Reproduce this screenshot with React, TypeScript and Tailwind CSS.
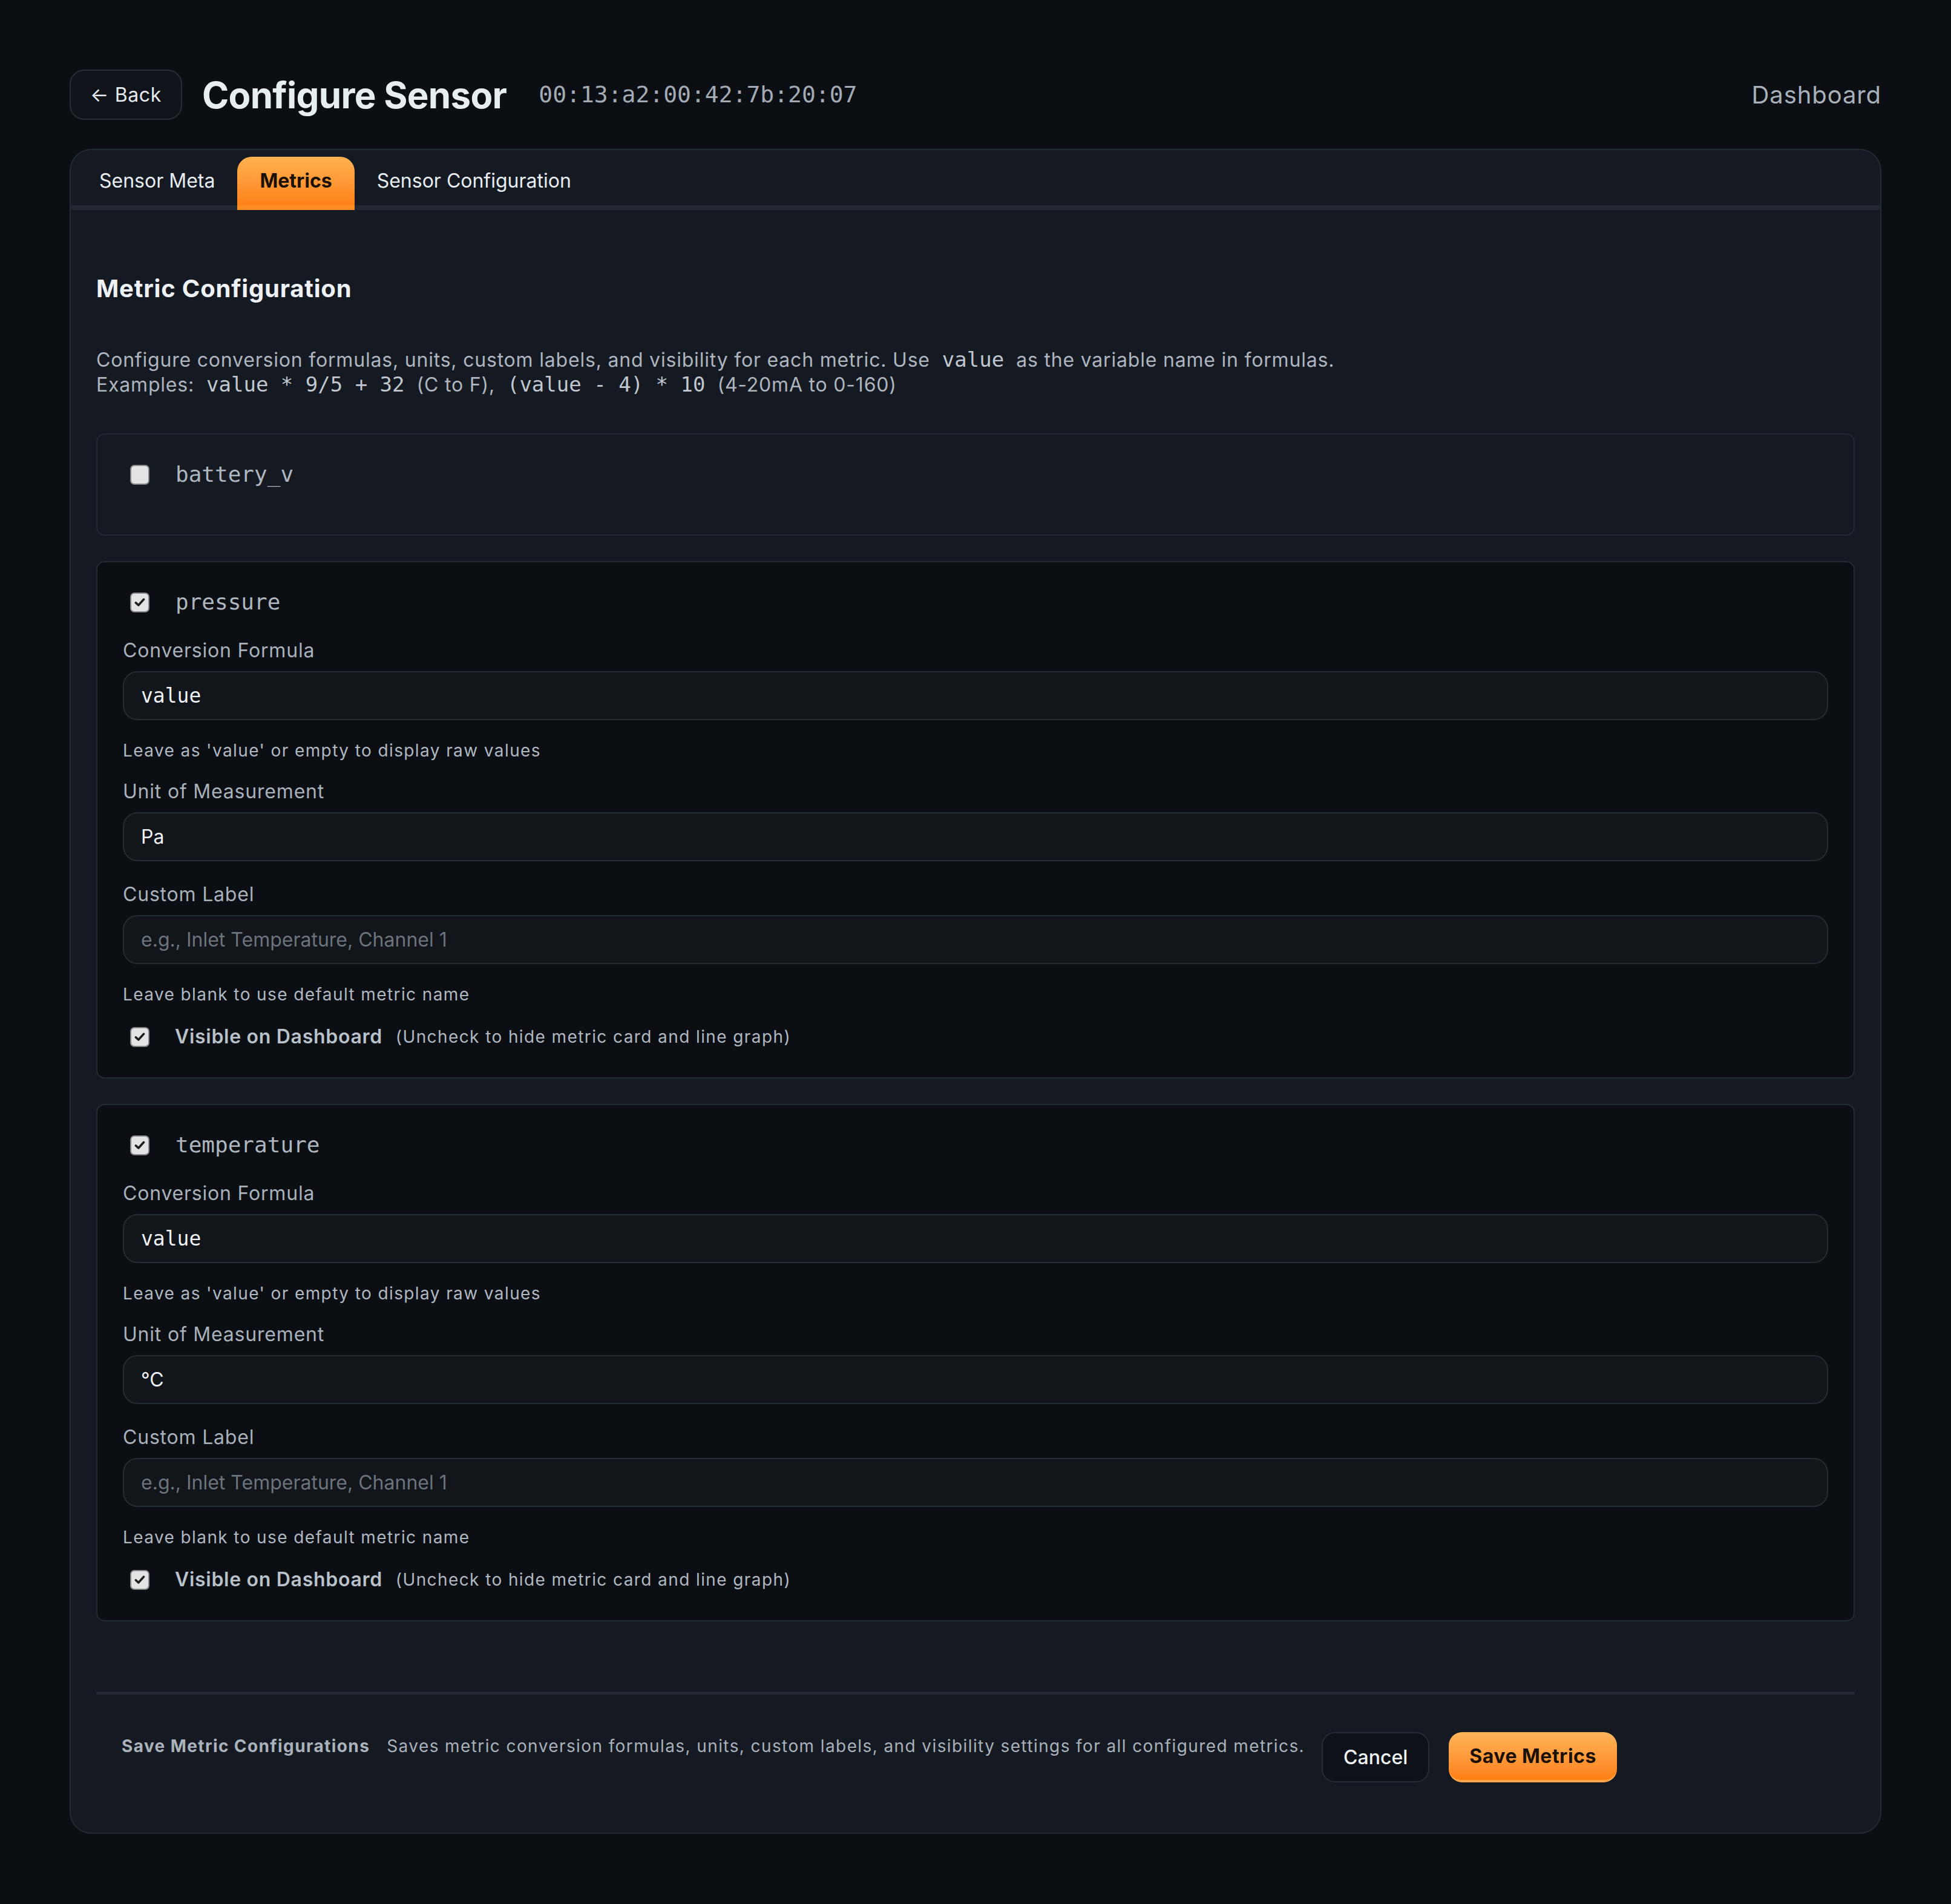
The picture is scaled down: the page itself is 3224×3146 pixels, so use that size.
import React from "react";

const mono = "font-['DejaVu_Sans_Mono','Liberation_Mono',monospace]";

type Metric = {
  name: string;
  enabled: boolean;
  formula?: string;
  unit?: string;
};

const metrics: Metric[] = [
  { name: "battery_v", enabled: false },
  { name: "pressure", enabled: true, formula: "value", unit: "Pa" },
  { name: "temperature", enabled: true, formula: "value", unit: "°C" },
];

function CheckBox({ checked }: { checked: boolean }) {
  return (
    <span className="ml-[12px] flex h-[33px] w-[32px] shrink-0 items-center justify-center rounded-[7px] border-2 border-[#858585] bg-[#e3e3e3]">
      {checked && (
        <svg viewBox="0 0 16 16" className="h-[22px] w-[22px]">
          <path
            d="M3.2 8.6 L6.4 11.6 L12.8 4.6"
            fill="none"
            stroke="#1e1e1e"
            strokeWidth="2.6"
            strokeLinecap="round"
            strokeLinejoin="round"
          />
        </svg>
      )}
    </span>
  );
}

function Field({
  label,
  children,
  className = "",
}: {
  label: string;
  children: React.ReactNode;
  className?: string;
}) {
  return (
    <div className={className}>
      <div className="text-[32px] leading-[48px] tracking-[0.8px] text-[#a9b1bb]">
        {label}
      </div>
      <div className="mt-[10px] flex h-[81px] items-center rounded-[24px] border-2 border-[#252c35] bg-[#121519] px-[28px]">
        {children}
      </div>
    </div>
  );
}

function Hint({ children }: { children: React.ReactNode }) {
  return (
    <p className="mt-[30px] text-[28px] leading-[40px] tracking-[1.4px] text-[#b0b8c1]">
      {children}
    </p>
  );
}

function MetricCard({ metric }: { metric: Metric }) {
  return (
    <div
      className={`rounded-[14px] border-2 border-[#242b34] px-[42px] pt-[42px] pb-[43px] ${
        metric.enabled ? "bg-[#0b0e12]" : "bg-[#151a22]"
      }`}
    >
      <div className="mb-[32px] flex h-[48px] items-center">
        <CheckBox checked={metric.enabled} />
        <span className={`${mono} ml-[43px] text-[36px] text-[#aeb6bf]`}>
          {metric.name}
        </span>
      </div>

      {metric.enabled && (
        <>
          <Field label="Conversion Formula">
            <span className={`${mono} text-[33px] text-[#eef2f6]`}>
              {metric.formula}
            </span>
          </Field>
          <Hint>Leave as 'value' or empty to display raw values</Hint>

          <Field label="Unit of Measurement" className="mt-[24px]">
            <span className="text-[32px] text-[#eef2f6]">{metric.unit}</span>
          </Field>

          <Field label="Custom Label" className="mt-[31px]">
            <span className="text-[32px] text-[#6b737d]">
              e.g., Inlet Temperature, Channel 1
            </span>
          </Field>
          <Hint>Leave blank to use default metric name</Hint>

          <div className="mt-[26px] flex h-[48px] items-center">
            <CheckBox checked />
            <span className="ml-[42px] text-[32px] font-semibold tracking-[0.7px] text-[#b9c1ca]">
              Visible on Dashboard
            </span>
            <span className="ml-[22px] text-[28px] tracking-[1.4px] text-[#b0b8c1]">
              (Uncheck to hide metric card and line graph)
            </span>
          </div>
        </>
      )}
    </div>
  );
}

export default function App() {
  return (
    <div className="min-h-[3146px] bg-[#0b0e13] px-[115px] pt-[115px] pb-[118px] font-['Inter',sans-serif]">
      {/* page header */}
      <header className="flex h-[83px] items-center">
        <button className="flex h-[83px] items-center rounded-[24px] border-2 border-[#262d36] bg-[#10141a] px-[32px] text-[32px] tracking-[0.6px] text-[#e6ebf0]">
          ← Back
        </button>
        <h1 className="ml-[33px] text-[60px] font-bold tracking-[-0.7px] text-[#e6edf3]">
          Configure Sensor
        </h1>
        <span className={`${mono} ml-[53px] text-[38px] text-[#a3abb5]`}>
          00:13:a2:00:42:7b:20:07
        </span>
        <a className="ml-auto text-[40px] tracking-[0.9px] text-[#a8b0ba]">
          Dashboard
        </a>
      </header>

      <div className="mt-[48px] rounded-[36px] border-2 border-[#232a33] bg-[#151a22]">
        {/* tabs */}
        <div className="flex border-b-[8px] border-[#212831] px-[10px] pt-[11px] text-[32px]">
          <div className="flex h-[80px] items-center px-[37px] text-[#e8edf2]">
            Sensor Meta
          </div>
          <div className="-mb-[8px] flex h-[88px] items-center rounded-t-[24px] border-b-[8px] border-[#ff8d26] bg-gradient-to-b from-[#ffb24f] to-[#ff8116] px-[37px] font-bold text-[#1b1104]">
            Metrics
          </div>
          <div className="flex h-[80px] items-center px-[37px] text-[#e8edf2]">
            Sensor Configuration
          </div>
        </div>

        <div className="px-[42px] pt-[102px] pb-[42px]">
          <h2 className="text-[40px] leading-[56px] font-bold tracking-[0.8px] text-[#eef2f6]">
            Metric Configuration
          </h2>
          <div className="mt-[69px] text-[32px] leading-[41px] tracking-[0.8px] text-[#aeb5bf]">
            <div>
              Configure conversion formulas, units, custom labels, and visibility
              for each metric. Use
              <code className={`${mono} px-[20px] text-[34px] tracking-normal text-[#c0c7cf]`}>
                value
              </code>
              as the variable name in formulas.
            </div>
            <div>
              Examples:
              <code className={`${mono} px-[20px] text-[34px] tracking-normal text-[#c0c7cf]`}>
                value * 9/5 + 32
              </code>
              (C to F),
              <code className={`${mono} px-[20px] text-[34px] tracking-normal text-[#c0c7cf]`}>
                (value - 4) * 10
              </code>
              (4-20mA to 0-160)
            </div>
          </div>

          <div className="mt-[60px] flex flex-col gap-[42px]">
            {metrics.map((m) => (
              <MetricCard key={m.name} metric={m} />
            ))}
          </div>

          <div className="mt-[116px] h-[5px] bg-[#212831]" />

          {/* save bar */}
          <div className="mt-[62px] flex items-start gap-[28px] px-[42px] pb-[41px]">
            <span className="shrink-0 pt-[3px] text-[28px] leading-[40px] font-bold tracking-[1.4px] text-[#aab2bb]">
              Save Metric Configurations
            </span>
            <span className="pt-[3px] text-[28px] leading-[40px] tracking-[1.4px] text-[#a9b1ba]">
              Saves metric conversion formulas, units, custom labels, and
              visibility settings for all configured metrics.
            </span>
            <div className="flex shrink-0 gap-[32px]">
              <button className="h-[83px] rounded-[22px] border-2 border-[#262d36] bg-[#0e1218] px-[34px] text-[32px] font-medium text-[#f0f3f6]">
                Cancel
              </button>
              <button className="h-[83px] rounded-[22px] border-b-[4px] border-[#ffa64a] bg-gradient-to-b from-[#ffb558] to-[#ff7f12] px-[34px] text-[32px] font-bold tracking-[0.5px] text-[#1b1104]">
                Save Metrics
              </button>
            </div>
          </div>
        </div>
      </div>
    </div>
  );
}
